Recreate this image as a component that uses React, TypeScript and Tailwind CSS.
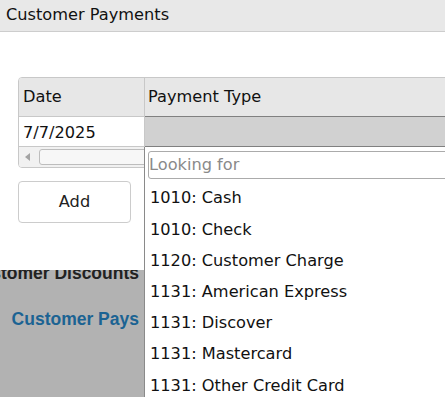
import React from "react";

const options = [
  "1010: Cash",
  "1010: Check",
  "1120: Customer Charge",
  "1131: American Express",
  "1131: Discover",
  "1131: Mastercard",
  "1131: Other Credit Card",
];

export default function App() {
  return (
    <div className="relative w-[445px] h-[397px] overflow-hidden bg-white font-['DejaVu_Sans',sans-serif] text-[16.2px] text-[#111]">
      <div className="flex flex-col h-full">
        {/* title bar */}
        <div className="h-[32px] shrink-0 flex items-center px-[6px] bg-[#e8e8e8] border-b border-[#cdcdcd]">
          Customer Payments
        </div>

        <div className="pt-[45px] pl-[18px] shrink-0">
          {/* grid */}
          <div className="w-[520px] border border-[#c8c8c8] rounded-[4px] overflow-hidden">
            <div className="flex h-[39px] bg-[#e7e7e7]">
              <div className="w-[126px] px-[4px] flex items-center border-r border-b border-[#c8c8c8]">Date</div>
              <div className="flex-1 px-[3px] flex items-center border-b border-[#808080]">Payment Type</div>
            </div>
            <div className="flex h-[30px]">
              <div className="w-[126px] px-[4px] pt-[3px] flex items-center border-r border-b border-[#c8c8c8] bg-white">
                7/7/2025
              </div>
              <div className="flex-1 bg-[#d1d1d1] border-b border-[#808080]"></div>
            </div>
            <div className="flex items-center h-[20px] bg-[#f1f1f1] pl-[6px]">
              <svg width="5" height="8" viewBox="0 0 5 8" className="shrink-0">
                <path d="M5 0 L0 4 L5 8 Z" fill="#a3a3a3" />
              </svg>
              <div className="ml-[9px] h-[16px] flex-1 rounded-[3px] border border-[#bdbdbd] bg-[#f7f7f7]"></div>
            </div>
          </div>

          <button className="mt-[13px] w-[113px] h-[42px] rounded-[4px] border border-[#cccccc] bg-white text-[#222] flex items-center justify-center">
            Add
          </button>
        </div>

        {/* page behind */}
        <div className="mt-[47px] flex-1 bg-[#b2b2b2] overflow-hidden font-['Liberation_Sans',Arial,sans-serif] font-bold text-[17.5px]">
          <div className="w-[139px] flex flex-col items-end gap-[25px] -mt-[7px]">
            <div className="h-[21px] leading-[21px] whitespace-nowrap text-[#222]">Customer Discounts</div>
            <div className="h-[21px] leading-[21px] whitespace-nowrap text-[#1b6393]">Customer Pays</div>
          </div>
        </div>
      </div>

      {/* dropdown */}
      <div className="absolute left-[144px] top-[147px] w-[340px] h-[252px] bg-white border-l border-[#8a8a8a]">
        <div className="mt-[4px] ml-[3px] h-[28px] border border-[#ababab] rounded-[3px] flex items-center text-[#8a8a8a]">
          Looking for
        </div>
        <div className="mt-[4px]">
          {options.map((o) => (
            <div key={o} className="h-[31.2px] flex items-center pl-[5px] whitespace-nowrap">
              {o}
            </div>
          ))}
        </div>
      </div>
    </div>
  );
}
